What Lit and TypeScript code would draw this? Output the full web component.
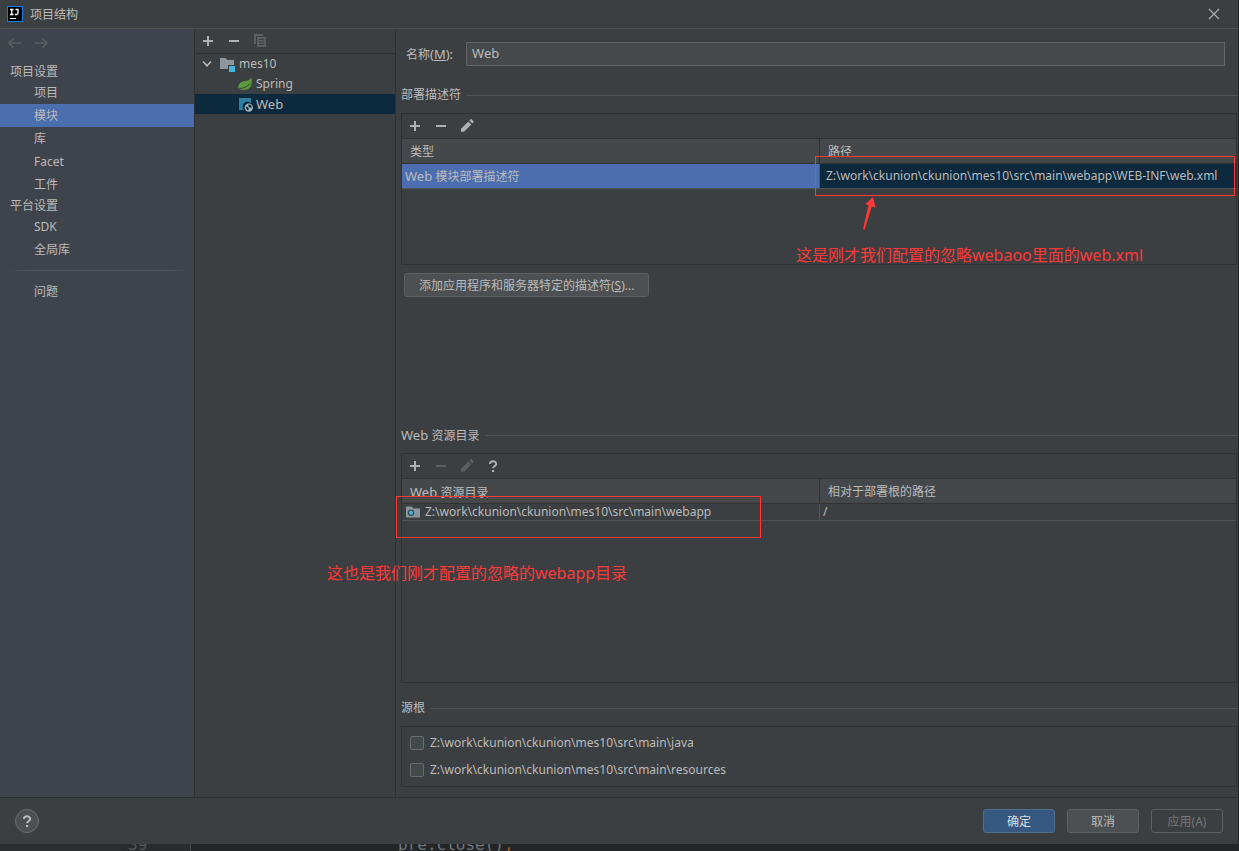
import { LitElement, html, css, svg, nothing } from "lit";
import { customElement, property } from "lit/decorators.js";

const ICONS: Record<string, unknown> = {
  plus: svg`<path d="M8 3v10M3 8h10" stroke="currentColor" stroke-width="2" fill="none"/>`,
  minus: svg`<path d="M3 8h10" stroke="currentColor" stroke-width="2" fill="none"/>`,
  copy: svg`<path d="M2 1h9v2H4v8H2z" fill="currentColor"/><path fill-rule="evenodd" d="M5 4h9v10H5zM7 6v1h5V6zM7 8.500v1h5v-1zM7 11v1h5v-1z" fill="currentColor"/>`,
  pencil: svg`<path d="M2 10.800L9.300 3.500l3 3L5 13.800H2zM10.300 2.500l1.200-1.200q.5-.4 1 0l2 2q.4.500 0 1l-1.200 1.200z" fill="currentColor"/>`,
  help: svg`<path d="M5 6C5 2.500 11.200 2.400 11.200 5.900C11.200 8 8.100 8 8.100 10.300" stroke="currentColor" stroke-width="2" fill="none"/><path d="M7 12h2.200v2H7z" fill="currentColor"/>`,
  back: svg`<path d="M14 8H2M6.500 3.500L2 8l4.500 4.500" stroke="currentColor" stroke-width="1.600" fill="none"/>`,
  forward: svg`<path d="M2 8h12M9.500 3.500L14 8l-4.500 4.500" stroke="currentColor" stroke-width="1.600" fill="none"/>`,
  close: svg`<path d="M3 3l10 10M13 3L3 13" stroke="currentColor" stroke-width="1.100" fill="none"/>`,
  chevron: svg`<path d="M4 5.500l4 4.300 4-4.300" stroke="currentColor" stroke-width="1.500" fill="none"/>`,
  module: svg`<path d="M1 2h5.500l2 2H15v5H9v4H1z" fill="#8c979f"/><rect x="10" y="10" width="6" height="6" fill="#40b6e0"/>`,
  spring: svg`<path d="M14.300 1.500C15.500 6 14.800 11.500 10.500 13.200C7.500 14.300 3.500 14 1.500 12.800C.5 9.500 2.500 6.500 6 5.600C9.500 4.900 12.800 4.500 14.300 1.500z" fill="#5a9a3c"/><path d="M2 12.600c4.500-.2 8.300-1.700 10.800-5" stroke="#3c3f41" stroke-width="1" fill="none"/>`,
  web: svg`<path d="M2 2h12v5.200A4.800 4.800 0 0 0 7 14H2z" fill="#2f7fa3"/><circle cx="11.800" cy="11.600" r="4.200" fill="#a6b3bc"/><path d="M8.600 10.300l2.200.6 1 1.400-.6 2.300-1.800-1.300zM11.400 8.300l2.800.9.600 2.200-1.500.4-1.900-1.300z" fill="#0d293e"/>`,
  folder: svg`<path d="M1 2.500h5.500l2 2H15v9H1z" fill="#8c979f"/><circle cx="6" cy="8.800" r="3.300" fill="#3c4a52"/><circle cx="6" cy="8.800" r="2" fill="#40b6e0"/>`,
};

@customElement("ide-icon")
class IdeIcon extends LitElement {
  @property() name = "";
  static styles = css`
    :host { display: inline-flex; flex: none; width: 16px; height: 16px; }
    svg { width: 16px; height: 16px; }
  `;
  render() {
    return html`<svg viewBox="0 0 16 16" aria-hidden="true">${ICONS[this.name]}</svg>`;
  }
}

const TOOL_LABELS: Record<string, string> = { plus: "添加", minus: "移除", pencil: "编辑", help: "帮助", copy: "复制", back: "后退", forward: "前进" };

const tool = (name: string, disabled = false) =>
  html`<button class="tool" aria-label=${TOOL_LABELS[name]} ?disabled=${disabled}><ide-icon name=${name}></ide-icon></button>`;

const navItem = (label: unknown, active = false) =>
  html`<li><a href="#" class="nav-item ${active ? "active" : ""}" aria-current=${active ? "page" : nothing}>${label}</a></li>`;

const en = (text: string) => html`<span class="en">${text}</span>`;

@customElement("app-root")
class AppRoot extends LitElement {
  static styles = css`
    :host {
      display: grid; grid-template-rows: minmax(0, 1fr) 7px; height: 100vh; min-height: 700px;
      background: #242526; color: #bbbbbb;
      font: 12px/20px "Noto Sans", "Noto Sans CJK SC", sans-serif;
    }
    * { box-sizing: border-box; }
    button, input { font: inherit; color: inherit; margin: 0; }
    ul { list-style: none; margin: 0; padding: 0; }
    a { color: inherit; text-decoration: none; }
    .en { font-size: 13px; }
    .dialog { display: grid; grid-template-rows: 29px minmax(0, 1fr) 46px; margin-right: 1px; background: #3c3f41; }
    .titlebar { display: flex; align-items: center; gap: 7px; padding: 0 16px 0 7px; border-bottom: 1px solid #515151; }
    .titlebar h1 { flex: 1; margin: 0; padding-top: 2px; font-size: 12px; font-weight: 400; }
    .logo { width: 16px; height: 16px; }
    .tool { display: inline-flex; padding: 0; border: 0; background: none; color: #afb1b3; }
    .tool:disabled { color: #5c5f61; }
    .body { display: grid; grid-template-columns: 195px 201px minmax(0, 1fr); border-bottom: 1px solid #2f3133; }
    .sidebar { background: #3f434c; border-right: 1px solid #2f3133; }
    .history { display: flex; gap: 10px; padding: 6px 7px 11px; }
    .sidebar h2 { margin: 0; padding-left: 10px; font-size: 12px; font-weight: 400; line-height: 19px; }
    .nav-item { display: block; padding-left: 34px; line-height: 23px; height: 23px; }
    .nav-item.active { background: #4b6eaf; }
    .nav-rule { height: 1px; margin: 9px 8px; border: 0; background: linear-gradient(90deg, transparent, #55585f 12%, #55585f 88%, transparent); }
    .tree-panel { border-right: 1px solid #2f3133; }
    .toolbar { display: flex; align-items: center; gap: 10px; height: 25px; padding: 0 5px; border-bottom: 1px solid #2f3133; }
    .tree-row { display: flex; align-items: center; gap: 4px; height: 20px; padding-left: 4px; line-height: 18px; }
    .tree-row.child { padding-left: 42px; gap: 3px; }
    .tree-row.selected { background: #0d293e; }
    .main { display: grid; grid-template-rows: auto 340fr 273fr auto; min-width: 0; padding-left: 5px; }
    .name-row { display: flex; align-items: center; gap: 13px; padding: 13px 13px 19px 5px; }
    .name-row input { flex: 1; min-width: 0; height: 24px; padding: 0 5px 2px; border: 1px solid #646464; background: #45494a; font-size: 13px; outline: 0; }
    .group { display: flex; flex-direction: column; min-width: 0; }
    .group h2 { display: flex; align-items: center; gap: 6px; height: 20px; margin: 0 0 8px; font-size: 12px; font-weight: 400; line-height: 22px; white-space: pre; }
    .group h2::after { content: ""; flex: 1; height: 1px; background: #515557; }
    .panel { margin-right: 1px; border: 1px solid #2f3133; }
    .deploy { height: 152px; flex: none; }
    .resources { flex: 1; margin-bottom: 15px; }
    table { width: 100%; border-collapse: separate; border-spacing: 0; table-layout: fixed; }
    th, td { padding: 0; text-align: left; font-weight: 400; white-space: nowrap; }
    th { height: 25px; padding: 2px 0 0 8px; background: #45484a; border-bottom: 1px solid #2f3133; }
    th + th { border-left: 1px solid #2f3133; }
    td { height: 25px; padding-left: 3px; border-bottom: 1px solid #515557; }
    td + td { border-left: 1px solid #515557; }
    .deploy td:first-child { background: #4b6eaf; }
    .deploy td + td { background: #0d293e; padding-left: 6px; }
    .resources td { height: 17px; line-height: 16px; }
    .cell { display: flex; align-items: center; gap: 4px; }
    .button { height: 24px; padding: 1px 14px 0; border: 1px solid #5e6060; border-radius: 3px; background: #4c5052; line-height: 20px; }
    .add-descriptor { align-self: flex-start; margin: 8px 0 0 3px; }
    .roots { display: flex; flex-direction: column; gap: 7px; margin-bottom: 10px; padding: 6px 8px; }
    .roots label { display: flex; align-items: center; gap: 6px; height: 20px; }
    .roots input { appearance: none; width: 14px; height: 14px; border: 1px solid #6b6b6b; border-radius: 2px; background: #43494a; }
    .footer { display: flex; align-items: center; gap: 12px; padding: 0 15px; }
    .footer .button { min-width: 72px; }
    .footer .primary { background: #365880; border-color: #4c708c; color: #dddddd; }
    .footer .button:disabled { background: none; color: #777777; }
    .round { display: grid; place-items: center; width: 24px; height: 24px; margin-right: auto; padding: 0; border: 1px solid #6b6d6f; border-radius: 50%; background: #4c5052; }
    .editor { display: grid; grid-template-columns: 122px 69px 1fr; overflow: hidden; font: 16px/20px "DejaVu Sans Mono", monospace; color: #6f777f; }
    .editor > * { display: flex; align-items: flex-end; height: 11px; overflow: hidden; }
    .project { background: #2c2d2f; }
    .gutter { padding-left: 6px; color: #55585a; background: #292b2c; border-right: 1px solid #444444; }
    .code { padding-left: 207px; }
    .semi { color: #9a5b2d; }
    .mark { position: absolute; border: 1px solid #ff3838; pointer-events: none; }
    .note { position: absolute; color: #ff3838; font-size: 16px; line-height: 24px; white-space: nowrap; }
    .mark-descriptor { left: 815px; top: 156px; width: 420px; height: 40px; }
    .mark-resource { left: 396px; top: 496px; width: 365px; height: 42px; }
    .note-descriptor { left: 796px; top: 243px; }
    .note-resource { left: 327px; top: 561px; }
    .arrow { position: absolute; left: 860px; top: 195px; width: 18px; height: 36px; }
  `;

  render() {
    return html`
      <div class="dialog">
        <header class="titlebar">
          <svg class="logo" viewBox="0 0 16 16" aria-hidden="true">
            <rect x=".5" y=".5" width="15" height="15" fill="#000" stroke="#087cfa"/>
            <path d="M3 3.500h3.500M3 8.500h3.500M4.750 3.500v5M8.500 3.500H11V7q0 1.500-1.400 1.500H8" stroke="#fff" stroke-width="1.300" fill="none"/>
            <path d="M3 12.500h6" stroke="#fff"/>
          </svg>
          <h1>项目结构</h1>
          <button class="tool" aria-label="关闭"><ide-icon name="close"></ide-icon></button>
        </header>
        <div class="body">
          <nav class="sidebar">
            <div class="history">${tool("back", true)}${tool("forward", true)}</div>
            <h2>项目设置</h2>
            <ul>${navItem("项目")}${navItem("模块", true)}${navItem("库")}${navItem("Facet")}${navItem("工件")}</ul>
            <h2>平台设置</h2>
            <ul>${navItem("SDK")}${navItem("全局库")}</ul>
            <hr class="nav-rule" />
            <ul>${navItem("问题")}</ul>
          </nav>
          <section class="tree-panel">
            <div class="toolbar">${tool("plus")}${tool("minus")}${tool("copy", true)}</div>
            <div class="tree-row"><ide-icon name="chevron"></ide-icon><ide-icon name="module"></ide-icon>mes10</div>
            <div class="tree-row child"><ide-icon name="spring"></ide-icon>Spring</div>
            <div class="tree-row child selected"><ide-icon name="web"></ide-icon>${en("Web")}</div>
          </section>
          <main class="main">
            <div class="name-row">
              <label for="name">名称${en("(")}<u class="en">M</u>${en("):")}</label>
              <input id="name" type="text" value="Web" />
            </div>
            <section class="group">
              <h2>部署描述符</h2>
              <div class="panel deploy">
                <div class="toolbar">${tool("plus")}${tool("minus")}${tool("pencil")}</div>
                <table>
                  <thead><tr><th>类型</th><th>路径</th></tr></thead>
                  <tbody><tr><td>${en("Web ")}模块部署描述符</td><td>Z:\\work\\ckunion\\ckunion\\mes10\\src\\main\\webapp\\WEB-INF\\web.xml</td></tr></tbody>
                </table>
              </div>
              <button class="button add-descriptor">添加应用程序和服务器特定的描述符(<u>S</u>)...</button>
            </section>
            <section class="group">
              <h2><span>${en("Web ")}资源目录</span></h2>
              <div class="panel resources">
                <div class="toolbar">${tool("plus")}${tool("minus", true)}${tool("pencil", true)}${tool("help")}</div>
                <table>
                  <thead><tr><th>${en("Web ")}资源目录</th><th>相对于部署根的路径</th></tr></thead>
                  <tbody><tr>
                    <td><div class="cell"><ide-icon name="folder"></ide-icon>Z:\\work\\ckunion\\ckunion\\mes10\\src\\main\\webapp</div></td>
                    <td>/</td>
                  </tr></tbody>
                </table>
              </div>
            </section>
            <section class="group">
              <h2>源根</h2>
              <div class="panel roots">
                <label><input type="checkbox" />Z:\\work\\ckunion\\ckunion\\mes10\\src\\main\\java</label>
                <label><input type="checkbox" />Z:\\work\\ckunion\\ckunion\\mes10\\src\\main\\resources</label>
              </div>
            </section>
          </main>
        </div>
        <footer class="footer">
          <button class="round" aria-label="帮助"><ide-icon name="help"></ide-icon></button>
          <button class="button primary">确定</button>
          <button class="button">取消</button>
          <button class="button" disabled>应用(A)</button>
        </footer>
      </div>
      <div class="editor">
        <div class="project"></div>
        <div class="gutter">39</div>
        <div class="code">pre.close()<span class="semi">;</span></div>
      </div>
      <div class="mark mark-descriptor"></div>
      <svg class="arrow" viewBox="0 0 18 36" aria-hidden="true"><path d="M13 2L15.500 12.500 11.800 11.500 4.500 35 3 34 8.500 10.500 5.500 9z" fill="#ff3838"/></svg>
      <div class="note note-descriptor">这是刚才我们配置的忽略webaoo里面的web.xml</div>
      <div class="mark mark-resource"></div>
      <div class="note note-resource">这也是我们刚才配置的忽略的webapp目录</div>
    `;
  }
}
